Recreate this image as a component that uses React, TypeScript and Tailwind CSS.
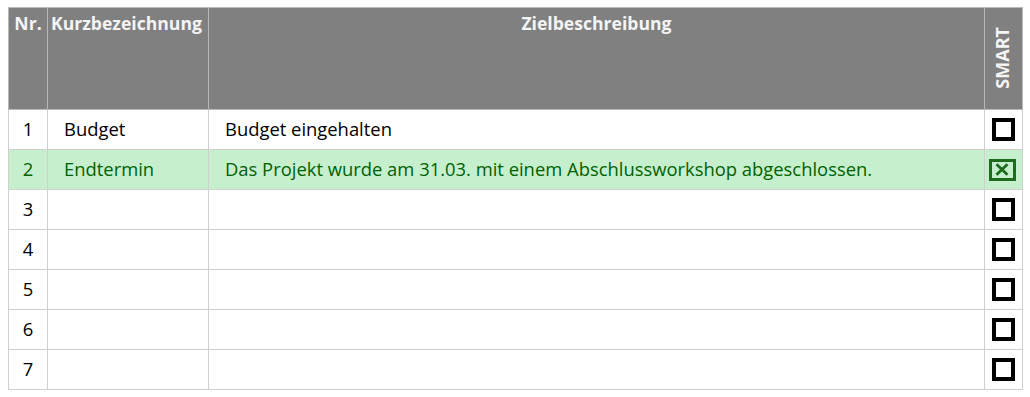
const rows = [
  { nr: 1, kurz: "Budget", ziel: "Budget eingehalten", smart: false },
  {
    nr: 2,
    kurz: "Endtermin",
    ziel: "Das Projekt wurde am 31.03. mit einem Abschlussworkshop abgeschlossen.",
    smart: true,
  },
  { nr: 3, kurz: "", ziel: "", smart: false },
  { nr: 4, kurz: "", ziel: "", smart: false },
  { nr: 5, kurz: "", ziel: "", smart: false },
  { nr: 6, kurz: "", ziel: "", smart: false },
  { nr: 7, kurz: "", ziel: "", smart: false },
];

const CheckBox = ({ checked }: { checked: boolean }) => {
  if (checked) {
    return (
      <div className="w-[27px] h-[22px] mr-[3px] border-[3px] border-[#1e6b1e] flex items-center justify-center">
        <svg width="14" height="13" viewBox="0 0 14 13">
          <path d="M1.5 1.2 L12.5 11.8 M12.5 1.2 L1.5 11.8" stroke="#1e6b1e" strokeWidth="2.8" />
        </svg>
      </div>
    );
  }
  return <div className="w-[23px] h-[23px] border-[4px] border-black bg-white" />;
};

export default function App() {
  return (
    <div className="bg-white w-[1030px] h-[397px] pt-[7px] pl-[8px]" style={{ fontFamily: '"Open Sans", sans-serif' }}>
      <table className="border-collapse text-[18.4px] leading-none">
        <colgroup>
          <col className="w-[39px]" />
          <col className="w-[161px]" />
          <col className="w-[776px]" />
          <col className="w-[38px]" />
        </colgroup>
        <thead>
          <tr className="h-[102px] bg-[#808080] text-[#f4f4f4] font-bold align-top text-[17.6px]">
            <th className="border border-[#b8b8b8] pt-[7px] text-center">Nr.</th>
            <th className="border border-[#b8b8b8] pt-[7px] text-left pl-[3px]">Kurzbezeichnung</th>
            <th className="border border-[#b8b8b8] pt-[7px] text-center">Zielbeschreibung</th>
            <th className="border border-[#b8b8b8] pt-[19px]">
              <div className="flex justify-center pr-[3px]">
                <span className="[writing-mode:vertical-rl] rotate-180 text-[18px] font-bold">SMART</span>
              </div>
            </th>
          </tr>
        </thead>
        <tbody>
          {rows.map((r) => (
            <tr
              key={r.nr}
              className={r.smart ? "h-[40px] bg-[#c6efce] text-[#006100]" : "h-[40px] bg-white text-black"}
            >
              <td className="border border-[#d0d0d0] text-center">{r.nr}</td>
              <td className="border border-[#d0d0d0] pl-[16px]">{r.kurz}</td>
              <td className="border border-[#d0d0d0] pl-[16px]">{r.ziel}</td>
              <td className="border border-[#d0d0d0]">
                <div className="flex justify-center">
                  <CheckBox checked={r.smart} />
                </div>
              </td>
            </tr>
          ))}
        </tbody>
      </table>
    </div>
  );
}
